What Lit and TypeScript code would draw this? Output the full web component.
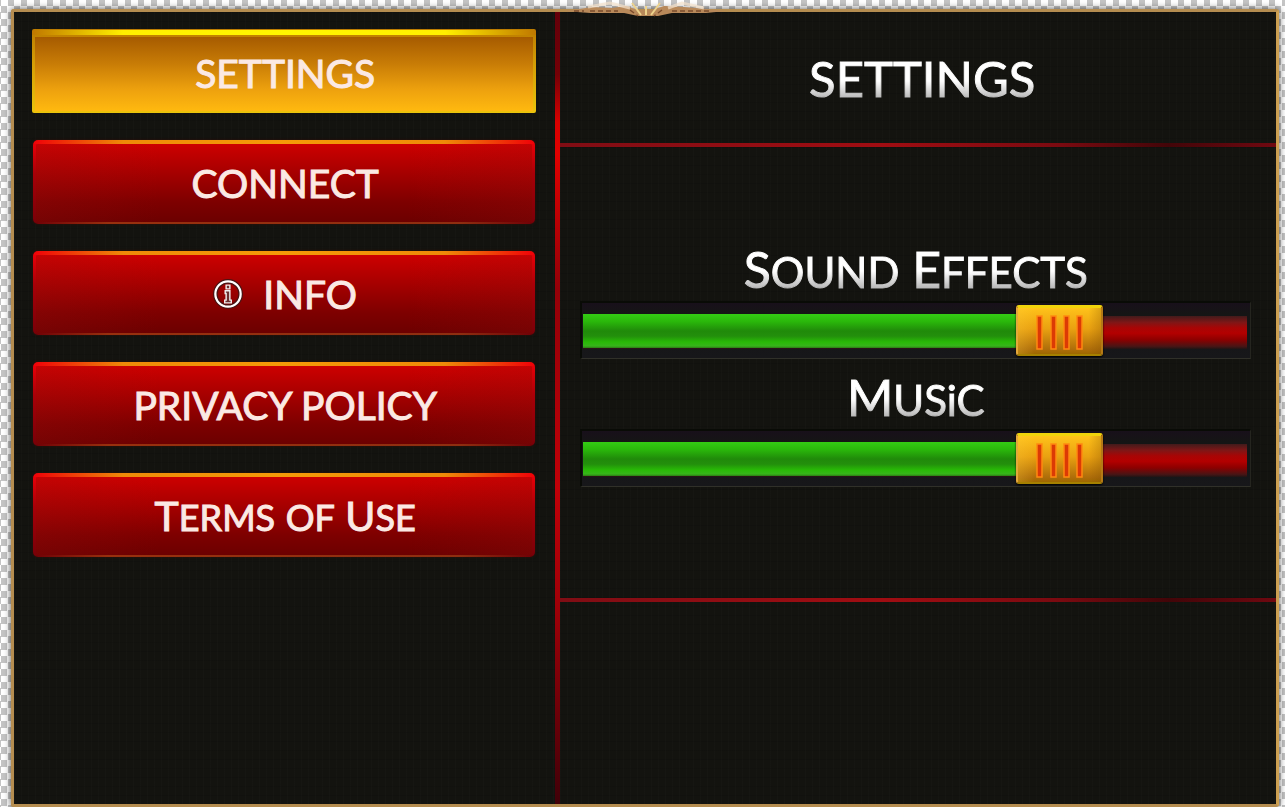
import { LitElement, html, css, svg } from "lit";
import { customElement, state } from "lit/decorators.js";

@customElement("volume-slider")
class VolumeSlider extends LitElement {
  static properties = { label: {}, small: {}, value: { type: Number } };
  declare label: string;
  declare small: string;
  declare value: number;
  constructor() {
    super();
    this.label = "";
    this.small = "";
    this.value = 75;
  }
  static styles = css`
    :host { display: block; }
    label {
      display: block;
      height: 60px;
      line-height: 56px;
      text-align: center;
      font-size: 50px;
      color: transparent;
      background: linear-gradient(#fff 50%, #a8a8a8 85%);
      -webkit-background-clip: text;
      background-clip: text;
      -webkit-text-stroke: 1px transparent;
      white-space: nowrap;
    }
    .small { font-size: 42px; }
    .frame {
      box-sizing: border-box;
      height: 58px;
      margin-bottom: 10px;
      padding: 2px 3px 0 1px;
      border: solid #090b06;
      border-width: 2px 1px 1px 2px;
      border-right-color: #25251f;
      border-bottom-color: #303029;
      background: linear-gradient(#18101a, #151515 20%, #17171a);
    }
    input {
      -webkit-appearance: none;
      appearance: none;
      display: block;
      width: 100%;
      height: 51px;
      margin: 0;
      cursor: pointer;
      background:
        linear-gradient(#34cc14, #2ab80b 22%, #208a0a 50%, #238f0c 65%, #28b906 82%, #37b51a 94%, #2b7c14) 0 9px / calc(var(--value) * 1% - 10px) 34px no-repeat,
        linear-gradient(#421b1b, #801616 20%, #a80505 36%, #b30000 52%, #8c0000 72%, #481515 92%, #201414) 0 11px / 100% 33px no-repeat;
    }
    input:focus-visible { outline: 1px solid #e0a213; }
    input::-webkit-slider-thumb {
      -webkit-appearance: none;
      box-sizing: border-box;
      width: 87px;
      height: 51px;
      border: solid;
      border-width: 3px 2px 2px 2px;
      border-color: #f0d30b #b57a15 #a58000 #e5a83a;
      border-radius: 3px;
      box-shadow: 0 1px 2px #000;
      background:
        url("data:image/svg+xml,%3Csvg xmlns='http://www.w3.org/2000/svg' width='50' height='36'%3E%3Cg fill='%23dc3a05' stroke='%23ff8a10' stroke-width='1.500'%3E%3Cpath d='M2 1h5v33H2zM16 1h5v33h-5zM29 1h5v33h-5zM42 1h5v33h-5z'/%3E%3C/g%3E%3C/svg%3E") 17px 7px no-repeat,
        linear-gradient(90deg, #ffd04040, transparent 20%, transparent 85%, #75450040),
        linear-gradient(#ffc21a, #e9a111 45%, #ae6d0a 90%, #9e6800);
    }
  `;
  render() {
    return html`
      <label for="range">${this.label[0]}<span class="small">${this.label.slice(1)}</span>${this.small
        ? html` ${this.small[0]}<span class="small">${this.small.slice(1)}</span>`
        : ""}</label>
      <div class="frame">
        <input id="range" type="range" min="0" max="100" .value=${String(this.value)}
          style="--value:${this.value}"
          @input=${(e: Event) => (this.value = Number((e.target as HTMLInputElement).value))} />
      </div>`;
  }
}

const infoIcon = svg`<svg class="icon" viewBox="0 0 32 32" width="30" height="30" aria-hidden="true">
  <circle cx="16" cy="16" r="13.5" fill="none" stroke="#4a1414" stroke-width="5"/>
  <circle cx="16" cy="16" r="13.5" fill="none" stroke="#fff" stroke-width="2.4"/>
  <path d="M14 6.500h4v4h-4zM13 12.500H18v10h1.500V25.500h-7v-3h1.500v-7h-1z" fill="#6b3030" stroke="#eee" stroke-width="1.500"/>
</svg>`;

@customElement("app-root")
class AppRoot extends LitElement {
  @state() active = 0;

  static styles = css`
    :host {
      display: block;
      box-sizing: border-box;
      min-height: 100vh;
      padding: 9px 6px 0 11px;
      font-family: Lato, "Open Sans", sans-serif;
      background: repeating-conic-gradient(#fff 0 25%, #c4c4c4 0 50%) 1px 6px / 13px 13px;
    }
    .panel {
      position: relative;
      box-sizing: border-box;
      min-height: calc(100vh - 9px);
      display: grid;
      grid-template-columns: 433fr 567fr;
      border: 3px solid #b58d50;
      border-right-color: #cda052;
      border-radius: 3px;
      box-shadow: 0 0 7px #000a;
      background:
        repeating-linear-gradient(90deg, #ffffff03 0 1px, transparent 1px 7px),
        repeating-linear-gradient(#00000018 0 1px, transparent 1px 9px),
        #13130f;
    }
    .crest {
      position: absolute;
      left: 546px;
      top: -12px;
      width: 176px;
      height: 20px;
    }
    nav {
      display: flex;
      flex-direction: column;
      gap: 27px;
      padding: 17px 20px 20px 19px;
      border-right: 5px solid;
      border-image: linear-gradient(#64000a, #740006 8%, #d80000 14%, #e00000 18%, #940008 35%, #c00008 60%, #a00008 75%, #400008) 1;
    }
    nav button {
      display: flex;
      align-items: center;
      justify-content: center;
      gap: 20px;
      height: 84px;
      padding: 0 0 0 2px;
      font: 39px/48px Lato, "Open Sans", sans-serif;
      color: #fbe9e4;
      -webkit-text-stroke: 1px #fbe9e4;
      white-space: nowrap;
      cursor: pointer;
      border: solid transparent;
      border-width: 4px 3px 2px;
      border-radius: 5px;
      background:
        linear-gradient(90deg, #a0141430, transparent 25%, transparent 75%, #a0141430) padding-box,
        linear-gradient(#cd0000, #a80000 35%, #7d0000 75%, #6c0000) padding-box,
        linear-gradient(90deg, #f00008, #ee8a08 18%, #f59a08 50%, #ee8a08 82%, #f00008) 0 0 / 100% 4px no-repeat border-box,
        linear-gradient(90deg, #700006, #98300e 15%, #8f2e10 85%, #700006) 0 100% / 100% 2px no-repeat border-box,
        linear-gradient(#f00008, #a80008 40%, #780008) border-box;
      box-shadow: 0 0 3px #32100a;
    }
    nav button.active {
      margin: 0 -1px;
      border-width: 8px 3px 2px;
      border-radius: 2px;
      background:
        linear-gradient(#a65b00, #c77b06 35%, #eea20e 72%, #ffb90f) padding-box,
        linear-gradient(90deg, #c07800, #ffef00 18%, #fff500 50%, #ffef00 82%, #c07800) 0 1px / 100% 5px no-repeat border-box,
        linear-gradient(#bd7c00, #d49d05 40%, #ecc40c) border-box;
      box-shadow: none;
      padding-bottom: 2px;
    }
    nav button:focus-visible { outline: 2px solid #ffe000; }
    .mixed { font-size: 41px; }
    .small { font-size: 36px; }
    .content { display: flex; flex-direction: column; min-width: 0; }
    header {
      height: 131px;
      display: flex;
      align-items: center;
      justify-content: center;
      padding-left: 8px;
    }
    h1 {
      margin: 0;
      font-size: 49px;
      line-height: 60px;
      font-weight: 400;
      background: linear-gradient(#fff 55%, #b4b4b4 85%);
      -webkit-background-clip: text;
      background-clip: text;
      color: transparent;
      -webkit-text-stroke: 1px transparent;
    }
    .rule { height: 4px; background: linear-gradient(90deg, #800d14, #a00d12 45%, #7a0a10 70%, #420508 85%, #700810); }
    .controls { box-sizing: border-box; height: 451px; padding: 94px 25px 0 20px; }
  `;

  render() {
    const items = [
      html`<span>SETTINGS</span>`,
      html`<span>CONNECT</span>`,
      html`${infoIcon}<span>INFO</span>`,
      html`<span>PRIVACY POLICY</span>`,
      html`<span class="mixed">T<span class="small">ERMS</span> <span class="small">OF</span> U<span class="small">SE</span></span>`,
    ];
    return html`
      <div class="panel">
        <nav aria-label="Menu">
          ${items.map(
            (item, i) => html`<button type="button" class=${i === this.active ? "active" : ""}
              @click=${() => (this.active = i)}>${item}</button>`
          )}
        </nav>
        <section class="content">
          <header><h1>SETTINGS</h1></header>
          <div class="rule"></div>
          <div class="controls">
            <volume-slider label="SOUND" small="EFFECTS"></volume-slider>
            <volume-slider label="MUSiC"></volume-slider>
          </div>
          <div class="rule"></div>
        </section>
        <svg class="crest" viewBox="0 0 176 20" aria-hidden="true">
          <path d="M4 11L20 9 32 7 52 8 66 6 78 10 92 10 104 6 124 7 146 9 166 11 146 13 112 13 98 16 78 16 64 13 30 13z" fill="#b8895a"/>
          <path d="M28 7l22-4 20 5M108 8l14-5 22 5" fill="none" stroke="#f5e2cc" stroke-width="3" opacity=".7"/>
          <path d="M72 3l9 12M100 3l-9 12M86 6v9" fill="none" stroke="#ecd28c" stroke-width="2"/>
          <path d="M14 11h10M30 11h28M112 11h38M70 10l8 6M102 10l-8 6" fill="none" stroke="#7a4c2c" stroke-width="1.500" stroke-dasharray="5 3"/>
        </svg>
      </div>`;
  }
}
